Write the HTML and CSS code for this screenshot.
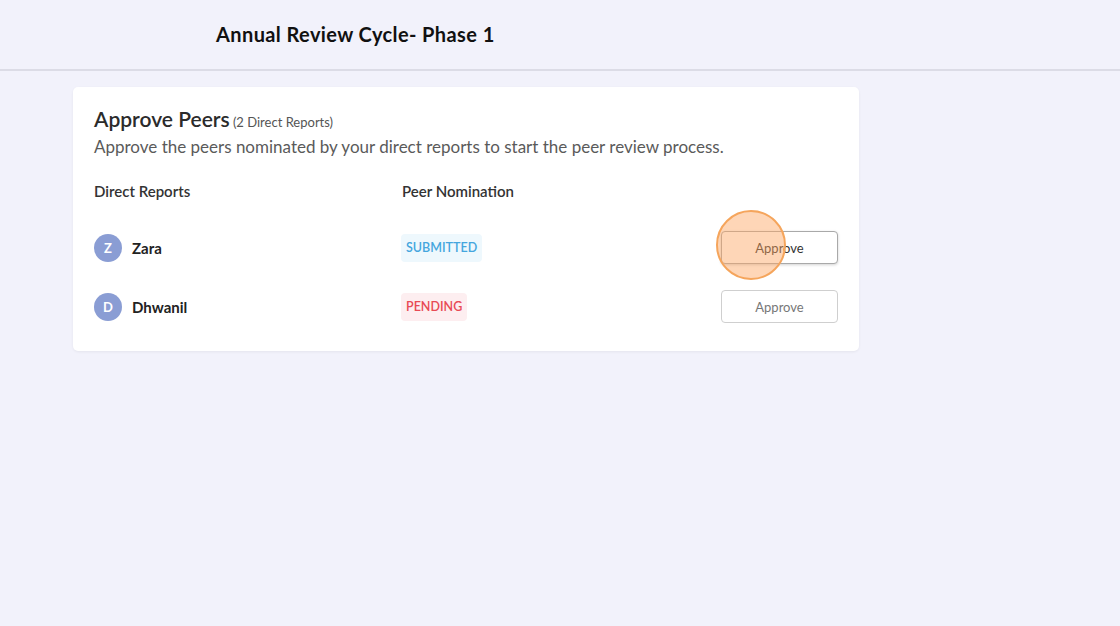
FILE: index.html
```html
<!DOCTYPE html>
<html>
<head>
<meta charset="utf-8">
<link rel="stylesheet" href="styles.css">
</head>
<body>
<header class="topbar">
  <h1 class="page-title">Annual Review Cycle- Phase 1</h1>
</header>
<main class="content">
  <section class="card">
    <div class="card-head">
      <h2 class="card-title">Approve Peers <span class="count">(2 Direct Reports)</span></h2>
      <p class="card-sub">Approve the peers nominated by your direct reports to start the peer review process.</p>
    </div>
    <div class="table">
      <div class="row head">
        <div class="col-name">Direct Reports</div>
        <div class="col-status">Peer Nomination</div>
        <div class="col-action"></div>
      </div>
      <div class="row">
        <div class="col-name"><span class="avatar">Z</span><span class="name">Zara</span></div>
        <div class="col-status"><span class="badge submitted">SUBMITTED</span></div>
        <div class="col-action">
          <button class="btn hover">Approve</button>
          <span class="click-mark"></span>
        </div>
      </div>
      <div class="row">
        <div class="col-name"><span class="avatar">D</span><span class="name">Dhwanil</span></div>
        <div class="col-status"><span class="badge pending">PENDING</span></div>
        <div class="col-action"><button class="btn">Approve</button></div>
      </div>
    </div>
  </section>
</main>
</body>
</html>
```

FILE: styles.css
```css
* { box-sizing: border-box; }
html, body { margin: 0; padding: 0; }
body {
  background: #f2f2fb;
  font-family: Lato, "Noto Sans", "Liberation Sans", sans-serif;
  color: #222;
  width: 1120px;
  height: 626px;
  overflow: hidden;
}
.topbar {
  height: 71px;
  border-bottom: 2px solid #dcdce6;
  padding-left: 216px;
  display: flex;
  align-items: center;
}
.page-title {
  margin: 0;
  font-size: 20px;
  font-weight: 700;
  color: #111;
  letter-spacing: 0.4px;
  padding-bottom: 1px;
}
.content {
  padding: 16px 0 0 73px;
}
.card {
  width: 786px;
  height: 264px;
  background: #fff;
  border-radius: 5px;
  box-shadow: 0 1px 3px rgba(0,0,0,0.06);
  padding: 18px 21px 0 21px;
}
.card-title {
  margin: 0;
  font-size: 21px;
  font-weight: 600;
  color: #2b2b2b;
  line-height: 27px;
}
.count {
  font-size: 13px;
  font-weight: 400;
  color: #555;
  margin-left: -2px;
}
.card-sub {
  margin: 0;
  font-size: 17px;
  color: #5a5a5a;
  line-height: 22px;
}
.table { margin-top: 23px; }
.row {
  display: flex;
  align-items: center;
  height: 59px;
}
.row.head {
  height: 20px;
  margin-bottom: 17px;
  font-size: 15px;
  font-weight: 600;
  color: #333;
}
.col-name { width: 308px; display: flex; align-items: center; }
.col-status { width: 319px; }
.col-action { width: 117px; position: relative; display: flex; }
.avatar {
  width: 28px;
  height: 28px;
  border-radius: 50%;
  background: #8a9dd4;
  color: #fff;
  font-size: 13px;
  font-weight: 700;
  display: inline-flex;
  align-items: center;
  justify-content: center;
}
.name {
  margin-left: 10px;
  font-size: 15px;
  font-weight: 700;
  color: #222;
}
.badge {
  display: inline-block;
  margin-left: -1px;
  height: 28px;
  line-height: 28px;
  padding: 0 5px;
  border-radius: 4px;
  font-size: 12.5px;
  font-weight: 600;
}
.submitted { background: #eef8fd; color: #45a6de; }
.pending { background: #fdeef0; color: #e84a55; }
.btn {
  width: 117px;
  height: 33px;
  background: #fff;
  border: 1px solid #cfcfcf;
  border-radius: 4px;
  font-family: inherit;
  font-size: 13px;
  color: #777;
  cursor: pointer;
}
.btn.hover {
  border-color: #a9a9a9;
  color: #333;
  box-shadow: 0 1px 3px rgba(0,0,0,0.18);
}
.click-mark {
  position: absolute;
  left: -5px;
  top: -21px;
  width: 70px;
  height: 70px;
  border-radius: 50%;
  background: rgba(252, 165, 95, 0.45);
  border: 2px solid #f5a55c;
}
```
